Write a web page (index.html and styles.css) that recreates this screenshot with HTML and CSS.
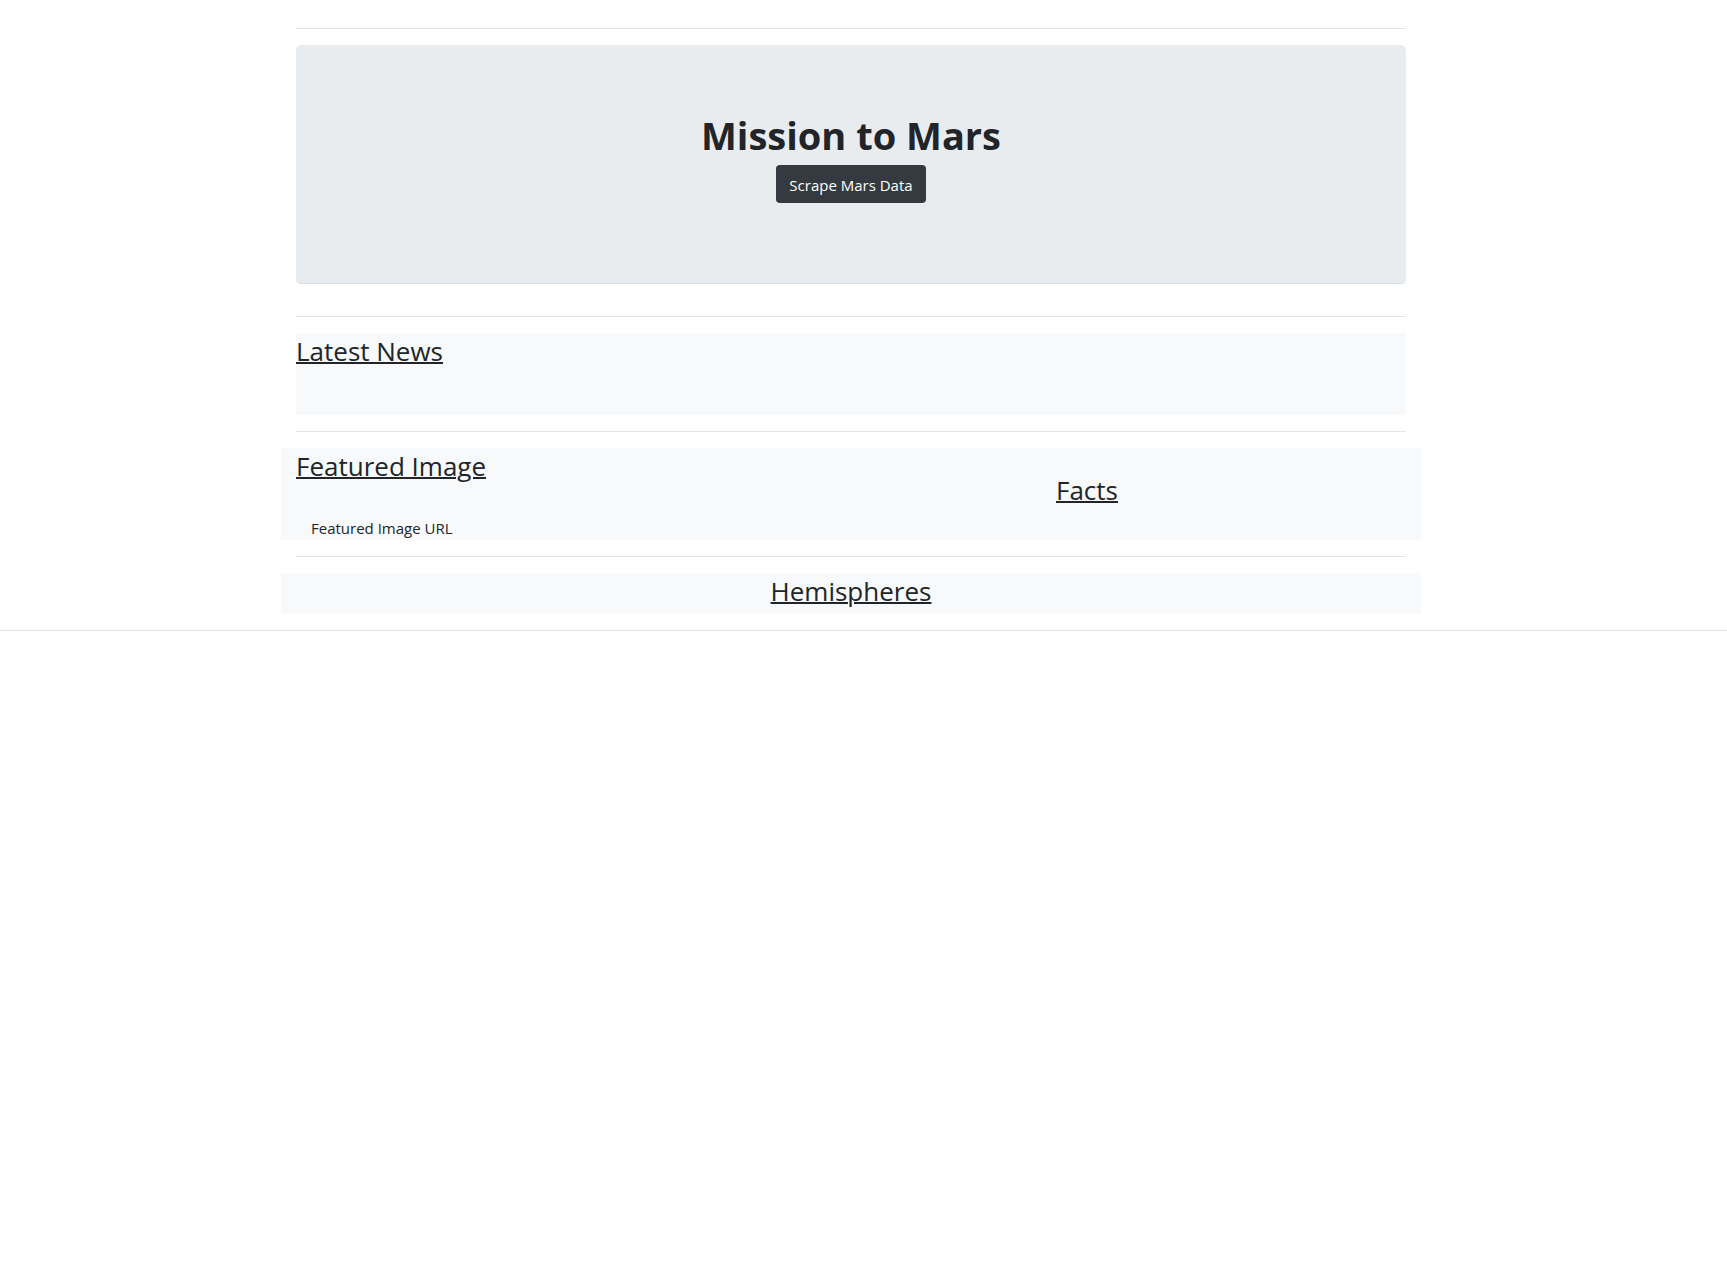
FILE: index.html
```html
<!DOCTYPE html>
<html lang="en">
<head>
  <meta charset="utf-8">
  <meta name="viewport" content="width=device-width, initial-scale=1">
  <title>Mission to Mars</title>
  <link rel="stylesheet" href="styles.css">
</head>
<body>
  <div class="page">
    <main class="container">
      <hr class="rule">
      <header class="hero">
        <h1 class="hero-title">Mission to Mars</h1>
        <button class="button" type="button">Scrape Mars Data</button>
      </header>
      <hr class="rule">
      <section class="news">
        <h2 class="heading">Latest News</h2>
      </section>
      <hr class="rule">
      <div class="row columns">
        <section class="featured">
          <h2 class="heading">Featured Image</h2>
          <p class="caption">Featured Image URL</p>
        </section>
        <section class="facts">
          <h2 class="heading">Facts</h2>
        </section>
      </div>
      <hr class="rule">
      <section class="row hemispheres">
        <h2 class="heading">Hemispheres</h2>
      </section>
    </main>
  </div>
  <hr class="rule">
</body>
</html>
```
FILE: styles.css
```css
*,
*::before,
*::after {
  box-sizing: border-box;
}

body {
  margin: 0;
  padding-top: 12px;
  background: #fff;
  color: #212529;
  font-family: "Open Sans", "Noto Sans", sans-serif;
  font-size: 15px;
  line-height: 24px;
}

.page {
  padding-right: 25px;
}

.container {
  width: 100%;
  max-width: 1140px;
  margin: 0 auto;
  padding: 0 15px;
}

.rule {
  margin: 16px 0;
  border: 0;
  border-top: 1px solid #e3e4e5;
}

.hero {
  margin-bottom: 32px;
  padding: 68px 32px 80px;
  border-bottom: 1px solid #dadddf;
  border-radius: 5px;
  background: #e9ecef;
  text-align: center;
}

.hero-title {
  margin: 0 0 8px;
  font-size: 38px;
  font-weight: 700;
  line-height: 44px;
}

.button {
  display: block;
  margin: 0 auto;
  padding: 8px 13px 6px;
  border: 0;
  border-radius: 4px;
  background: #343a40;
  color: #fff;
  font: inherit;
  cursor: pointer;
}

.heading {
  margin: 0 0 8px;
  padding-top: 3px;
  font-size: 26px;
  font-weight: 400;
  line-height: 30px;
  text-decoration: underline;
  text-decoration-thickness: 2px;
}

.news {
  padding-bottom: 41px;
  background: #f8f9fa;
}

.row {
  margin: 0 -15px;
  background: #f8f9fa;
}

.columns {
  display: grid;
  grid-template-columns: 2fr 1fr;
}

.featured {
  padding: 0 15px;
}

.caption {
  margin: 35px 0 0;
  padding: 0 15px;
}

.facts {
  padding: 24px 15px 0;
}

.hemispheres {
  display: flex;
  justify-content: center;
}
```
